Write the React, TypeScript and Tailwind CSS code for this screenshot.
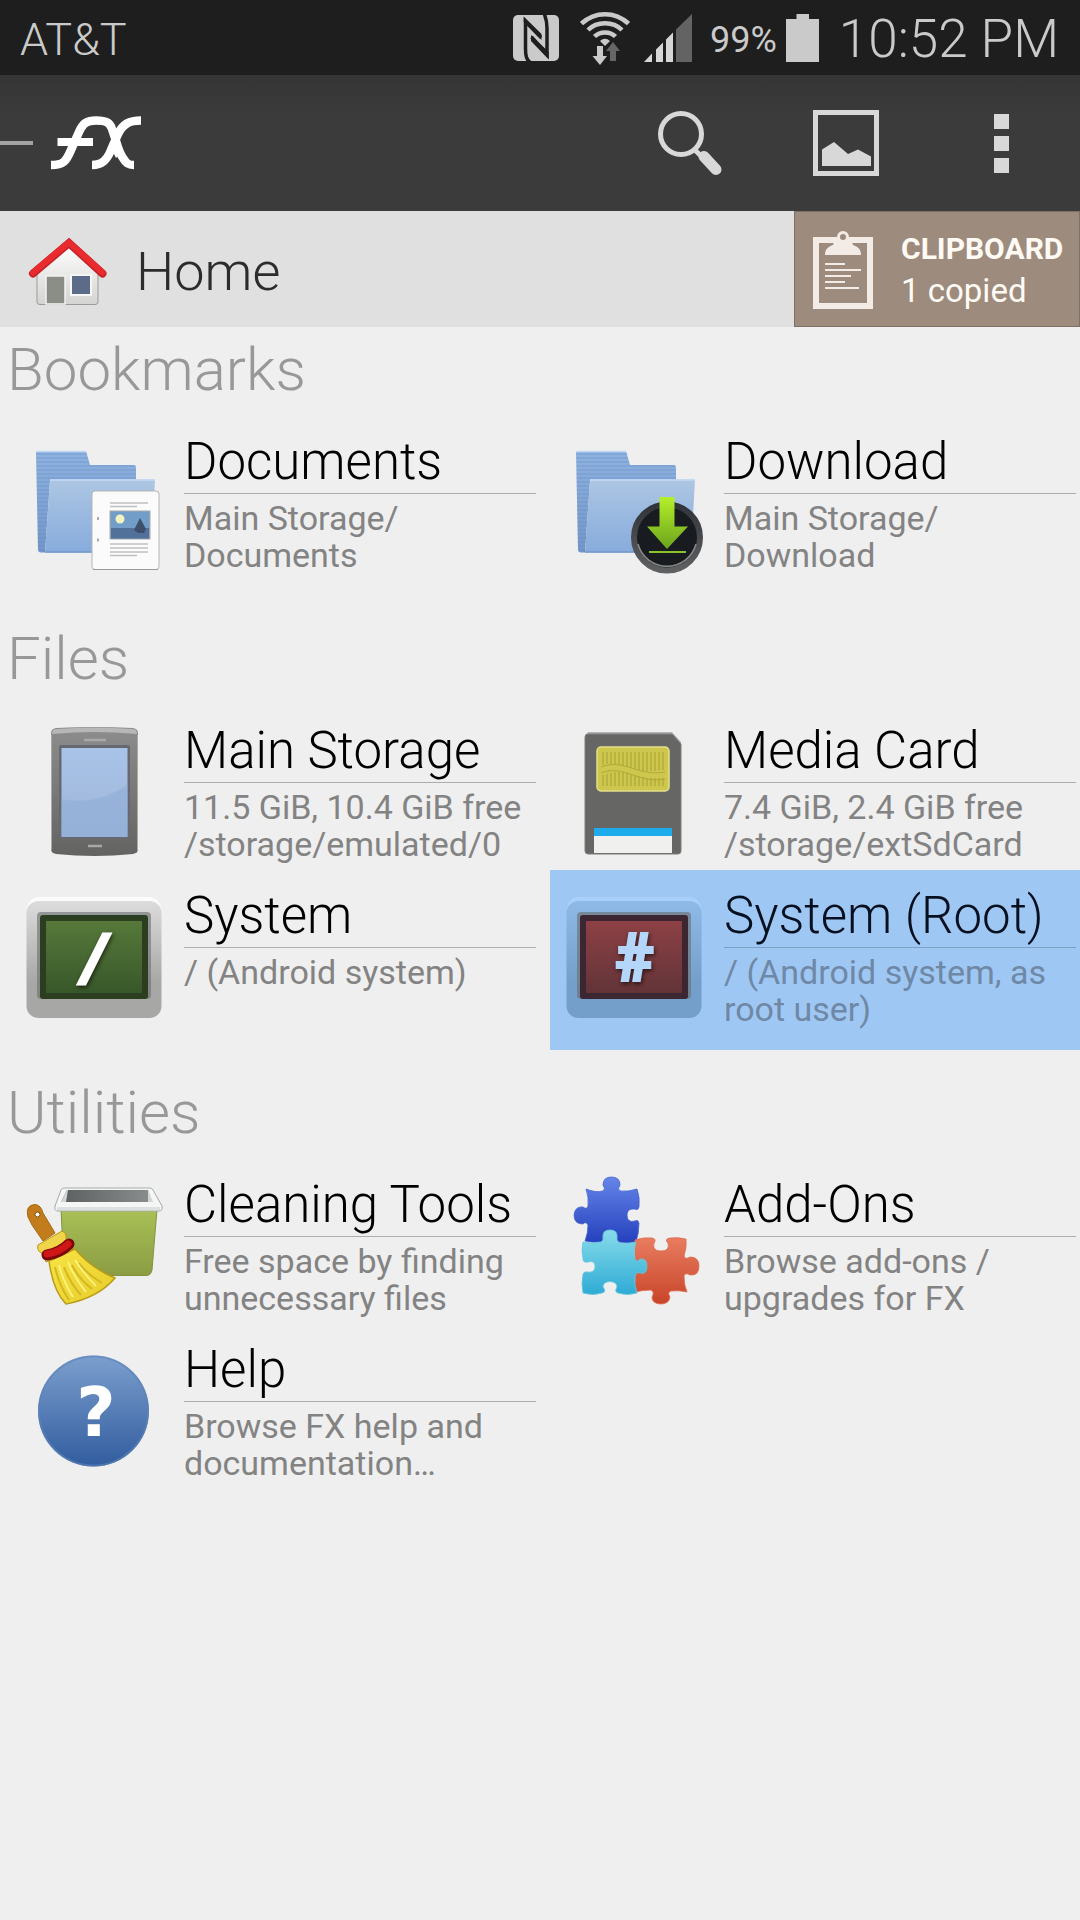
import type { ReactNode } from "react";

function NfcIcon() {
  return (
    <svg viewBox="513 15 46 46" className="h-[46px] w-[46px]" aria-hidden="true">
      <rect x="513" y="15" width="46" height="46" rx="5" fill="#cacaca" />
      <g fill="none" stroke="#1e1e1e" strokeWidth="3.500">
        <path d="M531 63C526 60 525.500 55 525.500 48V21.500L541 37.500" />
        <path d="M531.500 37L547 54.500V28C547 21 546 18 544 13" />
      </g>
      <path d="M523.700 16.500L541.500 34V40L523.700 22ZM531 35L548.700 52V59.500L531 41Z" fill="#1e1e1e" />
    </svg>
  );
}

function WifiIcon() {
  return (
    <svg viewBox="580 10 50 54" className="h-[54px] w-[50px]" aria-hidden="true">
      <g fill="none" stroke="#cacaca" strokeWidth="4.500">
        <path d="M581.500 22.500C595 10 615 10 628.500 22.500" />
        <path d="M588 29C597 20 613 20 622 29" />
        <path d="M594.500 35.500C600 30 610 30 615.500 35.500" />
      </g>
      <path d="M600 40Q605 35.500 610 40L605 45Z" fill="#cacaca" />
      <path d="M597 45H603V55H607L600 64L592.500 55H597Z" fill="#cacaca" />
      <path d="M610 60V50H606L613 41L620 50H616V60Z" fill="#666" />
    </svg>
  );
}

function SignalIcon() {
  return (
    <svg viewBox="644 14 48 48" className="h-12 w-12" aria-hidden="true">
      <path d="M644 62L652 53.500V62ZM656 62V49.500L663 42.500V62ZM666 62V39.500L673 32.500V62Z" fill="#d6d6d6" />
      <path d="M676 62V29.500L692 14V62Z" fill="#636363" />
    </svg>
  );
}

function BatteryIcon() {
  return (
    <svg viewBox="785 13 33 48" className="h-12 w-[33px]" aria-hidden="true">
      <path d="M785 18H795.500V13H808V18H818V61H785Z" fill="#cacaca" />
    </svg>
  );
}

function FxLogo() {
  return (
    <svg viewBox="0 112 145 62" className="h-[62px] w-[145px]" aria-hidden="true">
      <path d="M0 143H33" stroke="#a3a3a3" strokeWidth="4" />
      <g fill="none" stroke="#fff" strokeWidth="8.500">
        <path d="M51 165C63 165 66 162 71 150L79 132C83 123 87 120.500 96 120.500C107 120.500 110 123 112 129L116 141C118 148 120 154 123 158C126 163 128 165 134 165" />
        <path d="M92 165C102 165 107 160 111 150L118 134C123 124 129 120.500 141 120.500" />
        <path d="M57.500 142H93" strokeWidth="8" />
      </g>
      <path d="M113 128L118 134L121 152L116 158L112 150Z" fill="#fff" />
    </svg>
  );
}

function SearchIcon() {
  return (
    <svg viewBox="656 109 68 68" className="h-[68px] w-[68px]" aria-hidden="true">
      <ellipse cx="681" cy="134" rx="20.500" ry="20.500" fill="none" stroke="#d8d8d8" strokeWidth="5" />
      <path d="M694 149L704 159" stroke="#d8d8d8" strokeWidth="5" />
      <path d="M704 156.500L716 169.500" stroke="#d8d8d8" strokeWidth="11" strokeLinecap="round" />
    </svg>
  );
}

function PictureIcon() {
  return (
    <svg viewBox="813 110 66 66" className="h-[66px] w-[66px]" aria-hidden="true">
      <rect x="815.500" y="112.500" width="61" height="61" fill="none" stroke="#d8d8d8" strokeWidth="5" />
      <path d="M822 166V149.500L834 142L848 154L858 149.500L871 156.500V166Z" fill="#d8d8d8" />
    </svg>
  );
}

function OverflowIcon() {
  return (
    <svg viewBox="994 114 16 59" className="h-[59px] w-4" aria-hidden="true">
      <path d="M994 114H1009V129H994ZM994 136H1009V151H994ZM994 158H1009V173H994Z" fill="#d8d8d8" />
    </svg>
  );
}

function HouseIcon() {
  return (
    <svg viewBox="28 236 80 72" className="h-[72px] w-20" aria-hidden="true">
      <defs>
        <linearGradient id="wall" x1="0" y1="0" x2="0" y2="1">
          <stop offset="0" stopColor="#fdfdfd" />
          <stop offset="1" stopColor="#d4d4d2" />
        </linearGradient>
      </defs>
      <path d="M37 270L68 246L98 270V302Q98 304.500 95 304.500H40Q37 304.500 37 302Z" fill="url(#wall)" stroke="#9b9b99" strokeWidth="1" />
      <rect x="46" y="276" width="19" height="28" fill="#8b8e87" stroke="#f4f4f4" strokeWidth="1.500" />
      <rect x="71" y="275" width="20" height="20" fill="#5b6b88" stroke="#f7f7f7" strokeWidth="2" />
      <path d="M33 273.500L69 243L102.500 273.500" fill="none" stroke="#c32226" strokeWidth="8" strokeLinecap="round" />
      <path d="M33 272.500L69 242.500L102.500 272.500" fill="none" stroke="#e92b30" strokeWidth="6" strokeLinecap="round" />
    </svg>
  );
}

function ClipboardIcon() {
  return (
    <svg viewBox="813 229 60 79" className="h-[79px] w-[60px]" aria-hidden="true">
      <rect x="816" y="239" width="54" height="66" fill="none" stroke="#f3ece6" strokeWidth="6" />
      <path d="M825 254C825 248 828 246 833 244L836 236H850L853 244C858 246 861 248 861 254Z" fill="#f3ece6" />
      <circle cx="843" cy="236" r="4.500" fill="#9d8c7e" stroke="#f3ece6" strokeWidth="3" />
      <path d="M825 263H845M825 269H861M825 275H851M825 281H845M825 287H859" stroke="#f3ece6" strokeWidth="2" />
    </svg>
  );
}

function ItemIcon({ children }: { children: ReactNode }) {
  return (
    <svg viewBox="24 16 140 144" className="h-36 w-[140px] shrink-0" aria-hidden="true">
      {children}
    </svg>
  );
}

function Folder({ id }: { id: string }) {
  return (
    <g transform="translate(0 -1)">
      <defs>
        <linearGradient id={`${id}-back`} x1="0" y1="0" x2="0" y2="1">
          <stop offset="0" stopColor="#8fb3e0" />
          <stop offset="1" stopColor="#7396c8" />
        </linearGradient>
        <linearGradient id={`${id}-front`} x1="0" y1="0" x2="0" y2="1">
          <stop offset="0" stopColor="#adc6e3" />
          <stop offset="1" stopColor="#86abdc" />
        </linearGradient>
        <pattern id={`${id}-lines`} width="4" height="4" patternUnits="userSpaceOnUse">
          <path d="M0 3H4" stroke="#5f88c0" strokeWidth="1" opacity="0.5" />
        </pattern>
      </defs>
      <path d="M36 36H86L90 50H134Q136 50 136 53V66H50L45 137.500H41Q38 137.500 38 134Z" fill={`url(#${id}-back)`} />
      <path d="M36 36H86L90 50H134Q136 50 136 53V66H50L45 137.500H41Q38 137.500 38 134Z" fill={`url(#${id}-lines)`} />
      <path d="M50 64.500H155L151 137.500H45Z" fill={`url(#${id}-front)`} />
      <path d="M50 65H155M36 36.500H86" stroke="#c3d9f3" strokeWidth="1.500" />
      <path d="M45 137H151" stroke="#7298cb" strokeWidth="1.500" />
    </g>
  );
}

function DocumentsIcon() {
  return (
    <ItemIcon>
      <Folder id="docs" />
      <rect x="92" y="75" width="67" height="78.500" rx="3" fill="#fbfbfb" stroke="#b5b5b5" strokeWidth="1" />
      <path d="M93 153.500H158" stroke="#9a9a9a" strokeWidth="1" />
      <path d="M110 87H148M110 90.500H137M110 128H148M110 132H148M110 136H148M110 139.500H137" stroke="#c0c0c0" strokeWidth="1.500" />
      <rect x="110" y="95" width="40" height="28" fill="#719dc8" stroke="#aaa" strokeWidth="1" />
      <rect x="111" y="112" width="38" height="10.500" fill="#51719b" />
      <circle cx="120" cy="103" r="4.500" fill="#f3f3c2" />
      <path d="M140 102L134 114L138 117H144L146 113Z" fill="#3d4f69" />
      <path d="M98 101V104M98 122.500V125.500" stroke="#a9a9a9" strokeWidth="2" />
    </ItemIcon>
  );
}

function DownloadIcon() {
  return (
    <ItemIcon>
      <Folder id="down" />
      <defs>
        <linearGradient id="down-arrow" x1="0" y1="0" x2="0" y2="1">
          <stop offset="0" stopColor="#b4f02a" />
          <stop offset="1" stopColor="#6ba31c" />
        </linearGradient>
        <linearGradient id="down-ring" x1="0" y1="0" x2="0" y2="1">
          <stop offset="0" stopColor="#30333a" />
          <stop offset="1" stopColor="#5f6061" />
        </linearGradient>
      </defs>
      <circle cx="127" cy="121.500" r="33" fill="#181b1f" stroke="url(#down-ring)" strokeWidth="6" />
      <path d="M98 128A30 30 0 0 0 156 128" fill="none" stroke="#8a8a8a" strokeWidth="1.500" />
      <path d="M119.500 81H134.500V110.500H148L127 133L107 110.500H119.500Z" fill="url(#down-arrow)" />
      <path d="M109 136H146" stroke="#8bc22c" strokeWidth="2" />
    </ItemIcon>
  );
}

function PhoneIcon() {
  return (
    <ItemIcon>
      <defs>
        <linearGradient id="phone-body" x1="0" y1="0" x2="0" y2="1">
          <stop offset="0" stopColor="#8d8d8d" />
          <stop offset="1" stopColor="#636462" />
        </linearGradient>
        <linearGradient id="phone-screen" x1="0" y1="0" x2="0" y2="1">
          <stop offset="0" stopColor="#a9c3e8" />
          <stop offset="1" stopColor="#9db5d8" />
        </linearGradient>
      </defs>
      <path d="M51 28Q51 24 56 23Q95 21 133 23Q138 24 138 28V144Q138 148 133 149Q95 153 56 149Q51 148 51 144Z" fill="url(#phone-body)" />
      <path d="M52 29Q52 24 57 24Q95 21 132 24Q137 24 137 29Q95 25 52 29Z" fill="#b7b7b7" />
      <path d="M51.500 30V145M137.500 30V145" stroke="#a9a9a9" strokeWidth="1" />
      <rect x="59" y="40" width="71" height="94" rx="2" fill="#666a70" />
      <rect x="61.500" y="43" width="66" height="89" fill="url(#phone-screen)" />
      <path d="M61.500 94Q95 101 127.500 80V132H61.500Z" fill="#91add7" opacity="0.6" />
      <path d="M84 35H106M88 141H102" stroke="#a8a8a8" strokeWidth="2.500" />
    </ItemIcon>
  );
}

function MediaCardIcon() {
  return (
    <ItemIcon>
      <path d="M48 27H132L141 37V43H45V31Z" fill="#b2b2b2" />
      <path d="M48 29H131Q133 29 134 31L141 39V146Q141 149 138 149H48Q45 149 45 146V32Q45 29 48 29Z" fill="#666764" stroke="#7e7f7c" strokeWidth="1" />
      <rect x="57" y="42" width="72" height="44" rx="4" fill="#cdc74d" stroke="#e4e08b" strokeWidth="1.500" />
      <path d="M63 47V60M67 47V59M71 47V59M75 47V59M79 47V60M83 47V61M87 47V62M91 47V63M95 47V64M99 47V65M103 47V66M107 47V66M111 47V66M115 47V66M119 47V65M123 47V65M63 70V81M67 69V81M71 68V81M75 67V81M79 67V81M83 67V81M87 68V81M91 69V81M95 70V81M99 71V81M103 72V81M107 73V81M111 73V81M115 73V81M119 73V81M123 73V81" stroke="#b3ad3d" strokeWidth="1.500" />
      <path d="M61 62C84 53 98 72 125 67M61 68C84 59 98 79 125 74" fill="none" stroke="#b0aa3b" strokeWidth="1" />
      <rect x="54" y="123" width="78" height="8" fill="#1eaceb" />
      <rect x="54" y="131" width="78" height="17" fill="#f0f0ee" />
    </ItemIcon>
  );
}

function Monitor({
  id,
  shell,
  screen,
  frame,
  top,
  glyph,
  slant,
}: {
  id: string;
  shell: [string, string];
  screen: [string, string];
  frame: string;
  top: string;
  glyph: string;
  slant?: boolean;
}) {
  return (
    <ItemIcon>
      <defs>
        <linearGradient id={`${id}-shell`} x1="0" y1="0" x2="0" y2="1">
          <stop offset="0" stopColor={shell[0]} />
          <stop offset="0.7" stopColor={shell[1]} />
          <stop offset="1" stopColor={shell[1]} />
        </linearGradient>
        <linearGradient id={`${id}-screen`} x1="0" y1="0" x2="0" y2="1">
          <stop offset="0" stopColor={screen[0]} />
          <stop offset="1" stopColor={screen[1]} />
        </linearGradient>
      </defs>
      <rect x="27" y="27" width="134" height="60" rx="12" fill={top} />
      <rect x="26.500" y="31" width="135" height="117" rx="12" fill={`url(#${id}-shell)`} />
      <rect x="37" y="42" width="114" height="87" rx="4" fill="#686c6c" opacity="0.6" />
      <rect x="40" y="45" width="108" height="84" rx="3" fill={frame} />
      <rect x="46" y="51" width="96" height="72" fill={`url(#${id}-screen)`} />
      <text
        x="95"
        y={slant ? 108 : 111}
        textAnchor="middle"
        className={
          slant
            ? "fill-white stroke-white stroke-[3px] font-['DejaVu_Sans'] text-[60px] font-bold italic [filter:drop-shadow(1px_2px_2px_#0009)]"
            : "fill-[#b5d6fb] stroke-[#b5d6fb] stroke-2 font-[Roboto] text-[66px] font-black [filter:drop-shadow(1px_2px_2px_#0009)]"
        }
      >
        {glyph}
      </text>
    </ItemIcon>
  );
}

function CleaningIcon() {
  return (
    <ItemIcon>
      <defs>
        <linearGradient id="bin" x1="0" y1="0" x2="0" y2="1">
          <stop offset="0" stopColor="#a9c157" />
          <stop offset="1" stopColor="#8b9c43" />
        </linearGradient>
        <linearGradient id="bin-inside" x1="0" y1="0" x2="1" y2="0">
          <stop offset="0" stopColor="#5c5f5f" />
          <stop offset="1" stopColor="#8b8e8e" />
        </linearGradient>
        <linearGradient id="bristle" x1="0" y1="0" x2="1" y2="1">
          <stop offset="0" stopColor="#f8e445" />
          <stop offset="1" stopColor="#e6cc2a" />
        </linearGradient>
      </defs>
      <path d="M61 50H157L152 111Q151 116.500 146 116.500H70Q65 116.500 64 111Z" fill="url(#bin)" stroke="#81943e" strokeWidth="1" />
      <path d="M64 29H150Q152 29 153 31L162 47Q163 52 159 52H58Q54 52 55 47L61 31Q62 29 64 29Z" fill="#f5f6f6" stroke="#a6aaa9" strokeWidth="1" />
      <path d="M67 31H148L152 43H61Z" fill="url(#bin-inside)" />
      <path d="M67 31L61 43H66L68 31ZM148 31L153 43H148Z" fill="#d3d6d6" />
      <path d="M57 49.500H160" stroke="#dde0e0" strokeWidth="3" />
      <path d="M28 58Q25 46 35 45.500Q41 46 43 54L55 74L43 82L32 66Z" fill="#c27c1b" stroke="#a6680f" strokeWidth="1" />
      <circle cx="37.500" cy="55.500" r="2.500" fill="#fff" stroke="#7d4a08" strokeWidth="1" />
      <path d="M38 86L62 72Q67 74 66 80L73 90L46 103L44 95Q36 93 38 86Z" fill="#f0d54b" stroke="#b69614" strokeWidth="1" />
      <path d="M49 102L75 90Q91 109 115 119Q98 139 66 145Q53 132 49 102Z" fill="url(#bristle)" stroke="#b79c17" strokeWidth="1.500" />
      <path d="M55 108Q59 126 69 141M64 108Q70 124 81 136M72 106Q79 120 92 130M79 104Q88 116 102 124" fill="none" stroke="#d3b824" strokeWidth="2" />
      <path d="M59 106Q63 122 73 138M68 103Q75 120 86 133M75 101Q84 115 96 127" fill="none" stroke="#fff68a" strokeWidth="1.500" />
      <path d="M47 96Q60 94 69 85" fill="none" stroke="#7d0808" strokeWidth="11" strokeLinecap="round" />
      <path d="M47 95Q60 93 68 85" fill="none" stroke="#cf1717" strokeWidth="7" strokeLinecap="round" />
    </ItemIcon>
  );
}

function AddOnsIcon() {
  return (
    <ItemIcon>
      <defs>
        <linearGradient id="piece-blue" x1="0" y1="0" x2="0" y2="1">
          <stop offset="0" stopColor="#6585e8" />
          <stop offset="1" stopColor="#2540bd" />
        </linearGradient>
        <linearGradient id="piece-cyan" x1="0" y1="0" x2="0" y2="1">
          <stop offset="0" stopColor="#88dcea" />
          <stop offset="1" stopColor="#2eabd5" />
        </linearGradient>
        <linearGradient id="piece-red" x1="0" y1="0" x2="0" y2="1">
          <stop offset="0" stopColor="#e97c60" />
          <stop offset="1" stopColor="#c84529" />
        </linearGradient>
      </defs>
      <path d="M46 30Q56 34 63 32Q66 30 63 26Q63 18 71.500 18Q80 18 80 26Q77 30 80 32Q88 33 97 30Q100 38 99 48Q98 52 95 50Q87 49 87 56Q87 64 95 62Q98 60 99 64Q99 74 96 83Q87 85 79 83Q76 81 77 77Q77 71 70 71Q63 71 63 77Q64 82 61 83Q53 84 45 82Q48 74 48 66Q46 62 43 65Q34 65 34 56Q35 47 43 48Q47 51 48 47Q49 38 46 30Z" fill="url(#piece-blue)" stroke="#4264cf" strokeWidth="0.800" />
      <path d="M95 81Q103 78 112 79Q117 80 114 84Q112 92 121 92Q130 92 128 84Q124 80 130 79Q138 78 146 80Q147 88 144 97Q145 101 150 98Q159 98 159 107Q159 117 150 116Q145 113 144 117Q144 126 147 133Q139 131 131 132Q127 133 130 138Q129 145 121 145Q112 145 112 138Q115 133 111 131Q103 131 95 133Z" fill="url(#piece-red)" stroke="#de694e" strokeWidth="0.800" />
      <path d="M43 83Q52 85 61 83Q64 82 63 77Q63 71 70 71Q77 71 77 77Q76 82 79 84Q87 85 96 83Q93 92 95 100Q97 104 100 100Q107 99 107 107Q107 116 100 114Q97 112 95 117Q94 126 97 134Q87 137 78 134Q74 133 77 128Q77 123 70 122.500Q63 123 63 128Q67 133 62 134Q53 137 43 134Q41 125 43 115Q44 112 48 113Q55 114 55 107.500Q55 101 48 103Q43 104 43 100Q41 91 43 83Z" fill="url(#piece-cyan)" stroke="#64c6df" strokeWidth="0.800" />
    </ItemIcon>
  );
}

function HelpIcon() {
  return (
    <ItemIcon>
      <defs>
        <linearGradient id="help" x1="0" y1="0" x2="0" y2="1">
          <stop offset="0" stopColor="#7c9fcd" />
          <stop offset="1" stopColor="#315c9f" />
        </linearGradient>
      </defs>
      <circle cx="93.500" cy="87" r="55.500" fill="url(#help)" />
      <circle cx="93.500" cy="87" r="54.500" fill="none" stroke="#5d83b8" strokeWidth="2" opacity="0.600" />
      <text x="96" y="112" textAnchor="middle" className="fill-white font-['DejaVu_Sans'] text-[68px] font-bold">
        ?
      </text>
    </ItemIcon>
  );
}

type Entry = { title: string; lines: string[]; icon: ReactNode; active?: boolean };

const sections: { name: string; entries: Entry[] }[] = [
  {
    name: "Bookmarks",
    entries: [
      { title: "Documents", lines: ["Main Storage/", "Documents"], icon: <DocumentsIcon /> },
      { title: "Download", lines: ["Main Storage/", "Download"], icon: <DownloadIcon /> },
    ],
  },
  {
    name: "Files",
    entries: [
      { title: "Main Storage", lines: ["11.5 GiB, 10.4 GiB free", "/storage/emulated/0"], icon: <PhoneIcon /> },
      { title: "Media Card", lines: ["7.4 GiB, 2.4 GiB free", "/storage/extSdCard"], icon: <MediaCardIcon /> },
      {
        title: "System",
        lines: ["/ (Android system)"],
        icon: (
          <Monitor id="sys" shell={["#dcdcdc", "#a7a8a5"]} screen={["#56793a", "#38572a"]} frame="#2b3f20" top="#fbfbfb" glyph="/" slant />
        ),
      },
      {
        title: "System (Root)",
        lines: ["/ (Android system, as", "root user)"],
        active: true,
        icon: (
          <Monitor id="root" shell={["#8fb9e6", "#749fcb"]} screen={["#8d4145", "#623438"]} frame="#3b2631" top="#a8d0fb" glyph="#" />
        ),
      },
    ],
  },
  {
    name: "Utilities",
    entries: [
      { title: "Cleaning Tools", lines: ["Free space by finding", "unnecessary files"], icon: <CleaningIcon /> },
      { title: "Add-Ons", lines: ["Browse add-ons /", "upgrades for FX"], icon: <AddOnsIcon /> },
      { title: "Help", lines: ["Browse FX help and", "documentation…"], icon: <HelpIcon /> },
    ],
  },
];

function EntryButton({ entry }: { entry: Entry }) {
  return (
    <button
      type="button"
      className={`-mb-[15px] ml-[10px] flex min-h-[180px] items-start gap-5 pr-1 pl-[14px] text-left ${entry.active ? "bg-[#9fc7f4]" : ""}`}
    >
      <span className="shrink-0 pt-4">{entry.icon}</span>
      <span className="min-w-0 flex-1 pt-[15px]">
        <span
          className={`block border-b text-[51px] leading-[62px] font-light whitespace-nowrap ${entry.active ? "border-[#7d9fc4] text-[#07101f]" : "border-[#adadad] text-black"}`}
        >
          {entry.title}
        </span>
        <span className={`block pt-[6px] text-[34px] leading-[37px] ${entry.active ? "text-[#6f88a5]" : "text-[#838383]"}`}>
          {entry.lines.map((line) => (
            <span key={line} className="block whitespace-nowrap">
              {line}
            </span>
          ))}
        </span>
      </span>
    </button>
  );
}

export default function App() {
  return (
    <div className="min-h-screen bg-[#efefef] font-[Roboto,sans-serif]">
      <div className="flex h-[75px] items-center bg-[#1e1e1e] pr-[21px] pl-5 text-[#cacaca]">
        <span className="flex-1 pt-1 text-[45px] leading-[52px] font-light">AT&amp;T</span>
        <div className="flex items-center">
          <NfcIcon />
          <span className="ml-[21px]"><WifiIcon /></span>
          <span className="ml-[14px]"><SignalIcon /></span>
          <span className="ml-[18px] pt-1 text-[36px] leading-[52px]">99%</span>
          <span className="ml-[9px]"><BatteryIcon /></span>
          <span className="ml-5 pt-0.5 text-[53px] leading-[60px] font-light">10:52 PM</span>
        </div>
      </div>

      <header className="flex h-[136px] items-center bg-gradient-to-b from-[#353535] to-[#3b3b3b] to-30%">
        <h1 className="flex-1" aria-label="FX">
          <FxLogo />
        </h1>
        <button type="button" aria-label="Search" className="flex h-full w-[156px] items-center justify-center">
          <SearchIcon />
        </button>
        <button type="button" aria-label="Pictures" className="flex h-full w-[156px] items-center justify-center">
          <PictureIcon />
        </button>
        <button type="button" aria-label="More options" className="flex h-full w-[156px] items-center justify-center">
          <OverflowIcon />
        </button>
      </header>

      <nav className="flex h-[116px] bg-[#e0e0e0]">
        <button type="button" className="flex flex-1 items-center gap-7 pt-1.5 pl-7">
          <HouseIcon />
          <span className="text-[54px] leading-[60px] font-light text-[#2c2c2c]">Home</span>
        </button>
        <button
          type="button"
          className="flex w-[286px] items-center gap-7 border border-[#7f7064] bg-[#9d8c7e] pl-[18px] text-left text-[#fffaf4]"
        >
          <ClipboardIcon />
          <span className="flex flex-col pt-0.5">
            <span className="text-[30px] leading-[42px] font-bold">CLIPBOARD</span>
            <span className="text-[33px] leading-[42px]">1 copied</span>
          </span>
        </button>
      </nav>

      <main>
        {sections.map((section) => (
          <section key={section.name} className="mb-5 pb-[15px]">
            <h2 className="h-[89px] pt-[7px] pl-[7px] text-[60px] leading-[72px] font-light text-[#989898]">{section.name}</h2>
            <div className="grid grid-cols-2">
              {section.entries.map((entry) => (
                <EntryButton key={entry.title} entry={entry} />
              ))}
            </div>
          </section>
        ))}
      </main>
    </div>
  );
}
